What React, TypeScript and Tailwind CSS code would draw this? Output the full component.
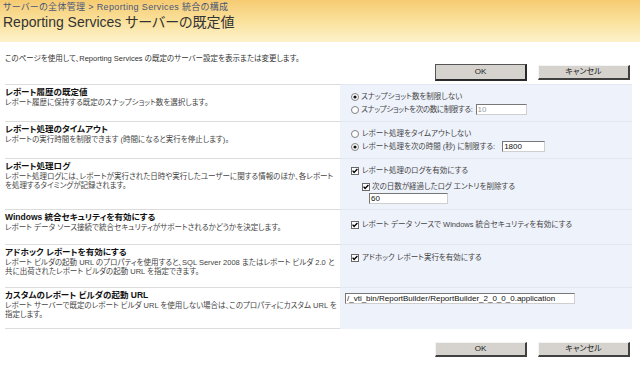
import React from "react";

const FONT =
  "[font-family:'Liberation_Sans','Noto_Sans_CJK_JP',sans-serif] [font-feature-settings:'palt']";

function Radio({ checked }: { checked?: boolean }) {
  return (
    <svg width="8" height="8" viewBox="0 0 8 8" className="shrink-0">
      <circle cx="4" cy="4" r="3.5" fill="#fff" stroke="#808080" strokeWidth="1" />
      {checked && <circle cx="4" cy="4" r="1.6" fill="#111" />}
    </svg>
  );
}

function Check() {
  return (
    <svg width="8" height="8" viewBox="0 0 8 8" className="shrink-0">
      <rect x="0.5" y="0.5" width="7" height="7" fill="#fff" stroke="#6a6a6a" />
      <path d="M1.6 3.6 L3.1 5.4 L6.4 1.9" fill="none" stroke="#000" strokeWidth="1.4" />
    </svg>
  );
}

function Btn({ label, primary }: { label: string; primary?: boolean }) {
  return (
    <div
      className={
        "w-[92px] flex items-center justify-center bg-[#d6d3ce] text-[8px] text-[#222] border-t border-l border-b-2 border-r-2 " +
        (primary
          ? "h-[17px] border-t-[#555] border-l-[#555] border-b-[#2a2a2a] border-r-[#2a2a2a]"
          : "h-[15px] border-t-[#f4f4f4] border-l-[#f4f4f4] border-b-[#404040] border-r-[#404040]")
      }
    >
      {label}
    </div>
  );
}

function TextBox({ w, value, disabled }: { w: string; value: string; disabled?: boolean }) {
  return (
    <div
      className={
        w +
        " h-[11px] bg-white border-t border-l border-t-[#777] border-l-[#777] border-b border-r border-b-[#cfcfcf] border-r-[#cfcfcf] text-[8px] leading-[9px] pl-[1px] whitespace-nowrap overflow-hidden " +
        (disabled ? "text-[#9a9a9a]" : "text-[#111]")
      }
    >
      {value}
    </div>
  );
}

function Row({
  h,
  title,
  desc,
  children,
  last,
}: {
  h: string;
  title: string;
  desc: React.ReactNode;
  children: React.ReactNode;
  last?: boolean;
}) {
  return (
    <div className={"flex " + h}>
      <div
        className={
          "w-[335px] border-t border-[#dcdcdc] pt-[2px] " + (last ? "border-b" : "")
        }
      >
        <div className="text-[8.5px] leading-[11px] font-bold text-[#111] whitespace-nowrap">{title}</div>
        <div className="text-[7.5px] leading-[9px] text-[#444] whitespace-nowrap">{desc}</div>
      </div>
      <div className="flex-1 bg-[#eef2fb] border-t border-[#e2e7f2] text-[7.5px] text-[#444]">
        {children}
      </div>
    </div>
  );
}

function Line({
  children,
  className,
}: {
  children: React.ReactNode;
  className?: string;
}) {
  return (
    <div className={"flex items-center h-[13px] whitespace-nowrap " + (className ?? "")}>
      {children}
    </div>
  );
}

export default function App() {
  return (
    <div className={"w-[640px] h-[366px] overflow-hidden bg-white " + FONT}>
      <div className="h-[42px] bg-gradient-to-b from-[#f6cb72] via-[#fae19b] to-[#fdf2cb] pl-[3px] pt-[2px]">
        <div className="text-[9px] leading-[10px] tracking-[0.35px] text-[#4a5677] whitespace-nowrap">
          サーバーの全体管理 &gt; Reporting Services 統合の構成
        </div>
        <div className="text-[14px] leading-[17px] text-[#333] mt-[2px] whitespace-nowrap">
          Reporting Services サーバーの既定値
        </div>
      </div>

      <div className="pl-[5px] mt-[12px] text-[7.5px] leading-[10px] text-[#333] whitespace-nowrap">
        このページを使用して、Reporting Services の既定のサーバー設定を表示または変更します。
      </div>

      <div className="flex justify-end gap-[11px] pr-[10px]">
        <Btn label="OK" primary />
        <div className="mt-[1px]">
          <Btn label="キャンセル" />
        </div>
      </div>

      <div className="ml-[5px] w-[627px] mt-[3px]">
        <Row
          h="h-[37px]"
          title="レポート履歴の既定値"
          desc="レポート履歴に保持する既定のスナップショット数を選択します。"
        >
          <div className="pt-[5px] pl-[11px]">
            <Line>
              <Radio checked />
              <span className="ml-[2px]">スナップショット数を制限しない</span>
            </Line>
            <Line>
              <Radio />
              <span className="ml-[2px] mr-[3px] tracking-[-0.35px]">スナップショットを次の数に制限する:</span>
              <TextBox w="w-[51px]" value="10" disabled />
            </Line>
          </div>
        </Row>

        <Row
          h="h-[37px]"
          title="レポート処理のタイムアウト"
          desc="レポートの実行時間を制限できます (時間になると実行を停止します)。"
        >
          <div className="pt-[5px] pl-[11px]">
            <Line>
              <Radio />
              <span className="ml-[3px]">レポート処理をタイムアウトしない</span>
            </Line>
            <Line>
              <Radio checked />
              <span className="ml-[3px] mr-[7px]">レポート処理を次の時間 (秒) に制限する:</span>
              <TextBox w="w-[43px]" value="1800" />
            </Line>
          </div>
        </Row>

        <Row
          h="h-[51px]"
          title="レポート処理ログ"
          desc={
            <>
              レポート処理ログには、レポートが実行された日時や実行したユーザーに関する情報のほか、各レポート
              <br />
              を処理するタイミングが記録されます。
            </>
          }
        >
          <div className="pt-[5px] pl-[11px]">
            <Line>
              <Check />
              <span className="ml-[3px]">レポート処理のログを有効にする</span>
            </Line>
            <Line className="mt-[3px] pl-[11px]">
              <Check />
              <span className="ml-[2px]">次の日数が経過したログ エントリを削除する</span>
            </Line>
            <div className="pl-[18px]">
              <TextBox w="w-[79px]" value="60" />
            </div>
          </div>
        </Row>

        <Row
          h="h-[35px]"
          title="Windows 統合セキュリティを有効にする"
          desc="レポート データ ソース接続で統合セキュリティがサポートされるかどうかを決定します。"
        >
          <div className="pt-[8px] pl-[11px]">
            <Line>
              <Check />
              <span className="ml-[3px]">レポート データ ソースで Windows 統合セキュリティを有効にする</span>
            </Line>
          </div>
        </Row>

        <Row
          h="h-[43px]"
          title="アドホック レポートを有効にする"
          desc={
            <>
              レポート ビルダの起動 URL のプロパティを使用すると、SQL Server 2008 またはレポート ビルダ 2.0 と
              <br />
              共に出荷されたレポート ビルダの起動 URL を指定できます。
            </>
          }
        >
          <div className="pt-[6px] pl-[11px]">
            <Line>
              <Check />
              <span className="ml-[3px]">アドホック レポート実行を有効にする</span>
            </Line>
          </div>
        </Row>

        <Row
          h="h-[42px]"
          last
          title="カスタムのレポート ビルダの起動 URL"
          desc={
            <>
              レポート サーバーで既定のレポート ビルダ URL を使用しない場合は、このプロパティにカスタム URL を
              <br />
              指定します。
            </>
          }
        >
          <div className="pt-[5px] pl-[5px]">
            <TextBox w="w-[230px]" value="/_vti_bin/ReportBuilder/ReportBuilder_2_0_0_0.application" />
          </div>
        </Row>
      </div>

      <div className="flex justify-end gap-[11px] pr-[10px] mt-[13px]">
        <Btn label="OK" />
        <Btn label="キャンセル" />
      </div>
    </div>
  );
}
